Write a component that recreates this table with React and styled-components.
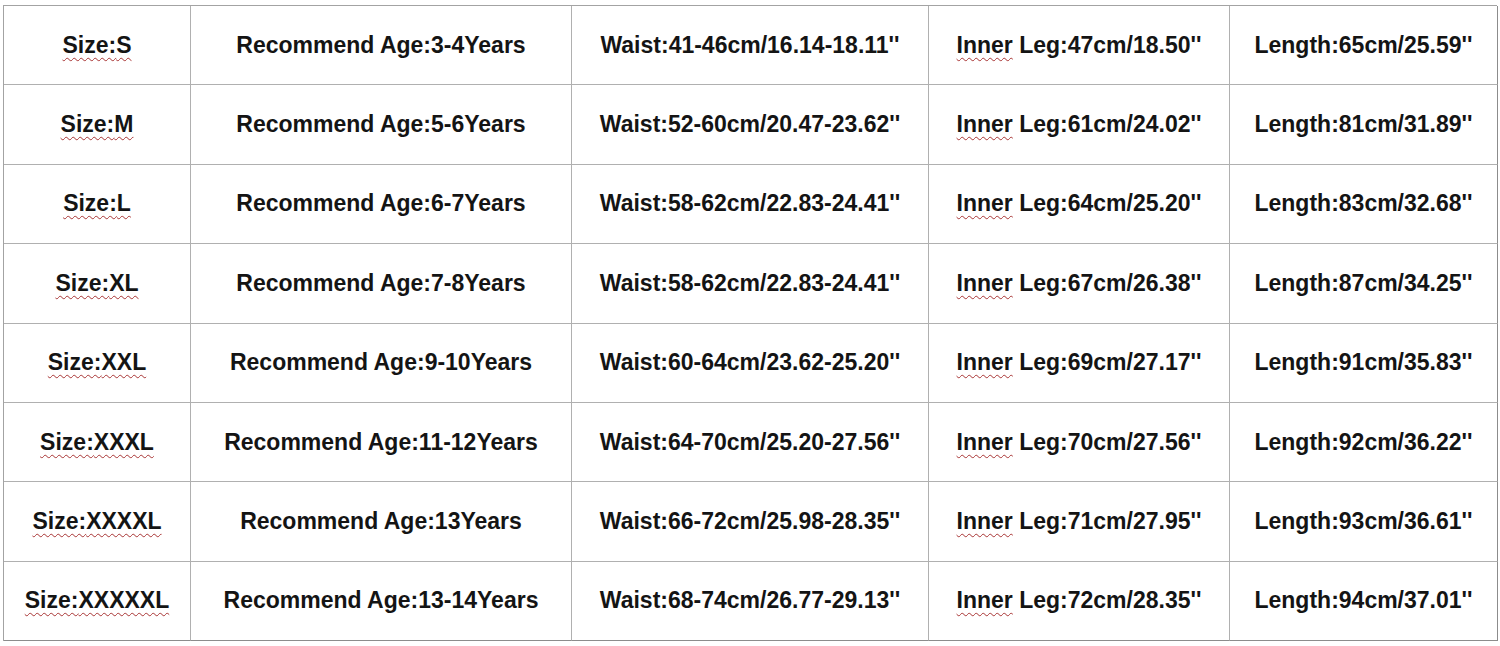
import React from "react";
import styled, { createGlobalStyle } from "styled-components";

const Global = createGlobalStyle`
  html, body { margin: 0; padding: 0; background: #ffffff; }
  body { font-family: "Liberation Sans", Arial, sans-serif; }
`;

const Page = styled.div`
  padding: 5px 3px 0 3px;
`;

const Table = styled.div`
  display: grid;
  grid-template-columns: 187px 381px 357px 301px 268px;
  grid-template-rows: repeat(8, 1fr);
  width: 1494px;
  height: 636px;
  box-sizing: border-box;
  border-top: 1.5px solid #a3a3a3;
  border-left: 1.5px solid #a3a3a3;
`;

const Cell = styled.div`
  display: flex;
  align-items: center;
  justify-content: center;
  box-sizing: border-box;
  border-right: 1.5px solid ${(p) => (p.$last ? "#8c8c8c" : "#b0b0b0")};
  border-bottom: 1.5px solid ${(p) => (p.$bottom ? "#8c8c8c" : "#b0b0b0")};
  font-size: 23px;
  font-weight: 700;
  color: #141414;
  white-space: nowrap;
`;

const Spell = styled.span`
  text-decoration-line: underline;
  text-decoration-style: wavy;
  text-decoration-color: #a83434;
  text-decoration-thickness: 1px;
  text-underline-offset: 4px;
`;

const rows = [
  ["S", "3-4Years", "41-46cm/16.14-18.11''", "47cm/18.50''", "65cm/25.59''"],
  ["M", "5-6Years", "52-60cm/20.47-23.62''", "61cm/24.02''", "81cm/31.89''"],
  ["L", "6-7Years", "58-62cm/22.83-24.41''", "64cm/25.20''", "83cm/32.68''"],
  ["XL", "7-8Years", "58-62cm/22.83-24.41''", "67cm/26.38''", "87cm/34.25''"],
  ["XXL", "9-10Years", "60-64cm/23.62-25.20''", "69cm/27.17''", "91cm/35.83''"],
  ["XXXL", "11-12Years", "64-70cm/25.20-27.56''", "70cm/27.56''", "92cm/36.22''"],
  ["XXXXL", "13Years", "66-72cm/25.98-28.35''", "71cm/27.95''", "93cm/36.61''"],
  ["XXXXXL", "13-14Years", "68-74cm/26.77-29.13''", "72cm/28.35''", "94cm/37.01''"],
];

export default function App() {
  return (
    <>
      <Global />
      <Page>
        <Table>
          {rows.map((r, i) => {
            const bottom = i === rows.length - 1;
            return (
              <React.Fragment key={i}>
                <Cell $bottom={bottom}>
                  <Spell>Size:{r[0]}</Spell>
                </Cell>
                <Cell $bottom={bottom}>Recommend Age:{r[1]}</Cell>
                <Cell $bottom={bottom}>Waist:{r[2]}</Cell>
                <Cell $bottom={bottom}>
                  <Spell>Inner</Spell>&nbsp;Leg:{r[3]}
                </Cell>
                <Cell $bottom={bottom} $last>
                  Length:{r[4]}
                </Cell>
              </React.Fragment>
            );
          })}
        </Table>
      </Page>
    </>
  );
}
